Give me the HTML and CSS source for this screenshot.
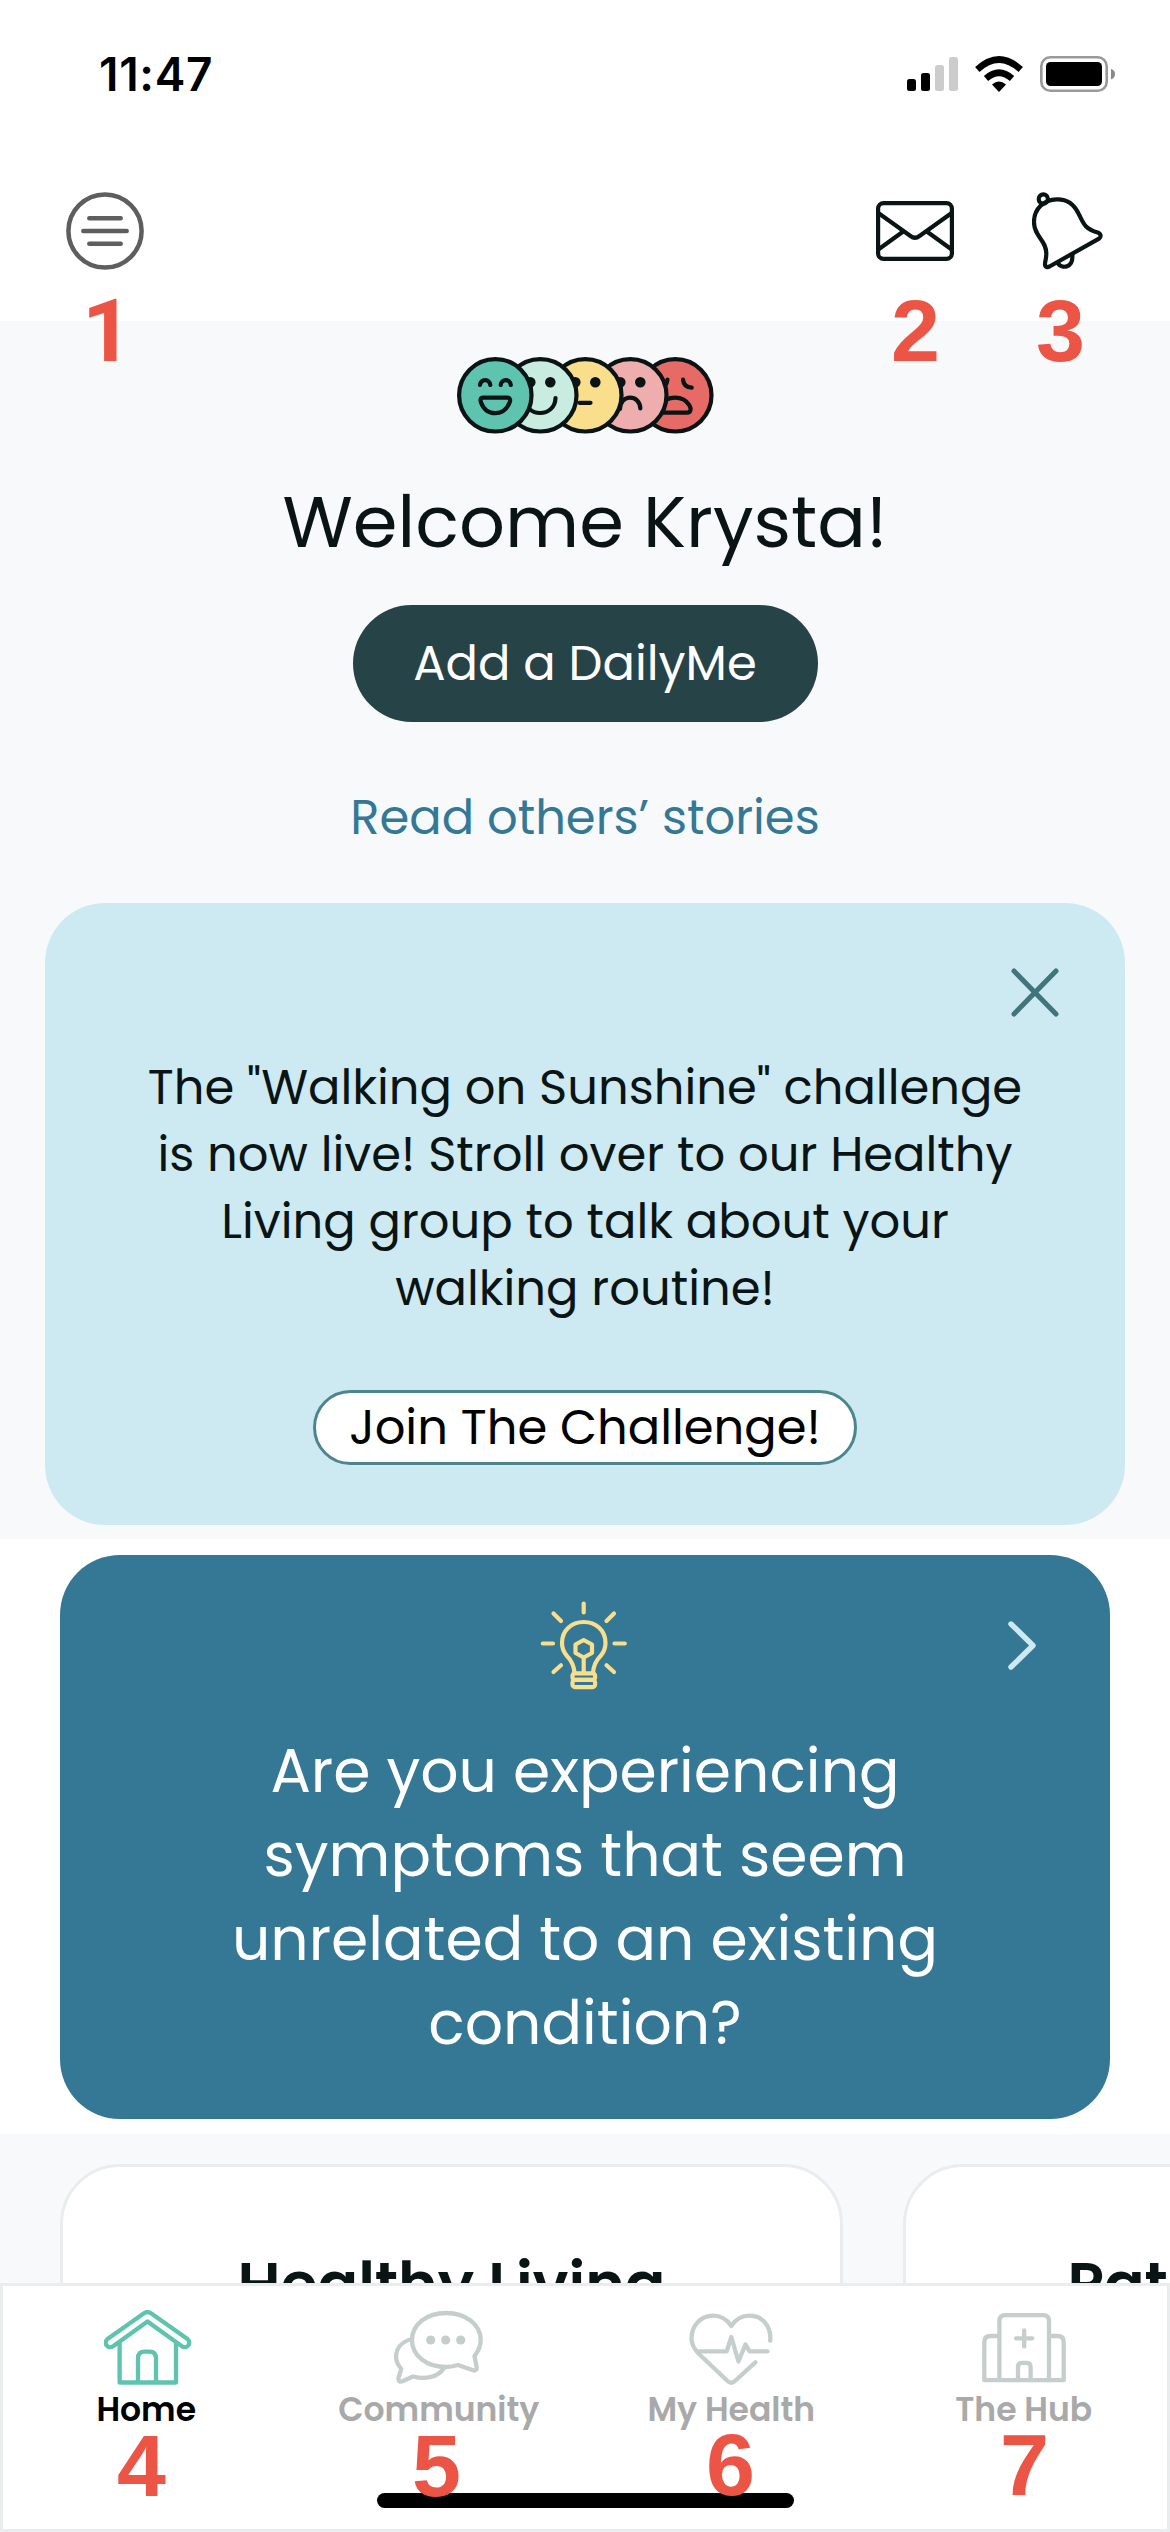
FILE: index.html
```html
<!DOCTYPE html>
<html lang="en">
<head>
  <meta charset="UTF-8">
  <meta name="viewport" content="width=device-width, initial-scale=1.0">
  <title>Home</title>
  <link rel="stylesheet" href="styles.css">
</head>
<body>
  <div class="screen">
    <div class="status-bar">
      <span class="time">11:47</span>
      <div class="status-icons">
        <svg class="signal" width="51" height="34" viewBox="0 0 51 34">
          <rect x="0" y="22" width="9" height="12" rx="2.5"/>
          <rect x="14" y="16" width="9" height="18" rx="2.5"/>
          <rect x="28" y="8" width="9" height="26" rx="2.5" fill="#ccc"/>
          <rect x="42" y="0" width="9" height="34" rx="2.5" fill="#ccc"/>
        </svg>
        <svg class="wifi" width="48" height="36" viewBox="0 0 48 36">
          <path d="M24 36 L17 28.5 Q24 22.5 31 28.5 Z"/>
          <path d="M11 22.5 Q24 11 37 22.5" fill="none" stroke="#000" stroke-width="6.5"/>
          <path d="M2.3 13.5 Q24 -6.5 45.7 13.5" fill="none" stroke="#000" stroke-width="6.5"/>
        </svg>
        <svg class="battery" width="75" height="36" viewBox="0 0 75 36">
          <rect x="1.3" y="1.3" width="65.4" height="33.4" rx="9" fill="none" stroke="#999" stroke-width="2.6"/>
          <rect x="6" y="6" width="56" height="24" rx="4.5"/>
          <path d="M71 13 Q75 14 75 18 Q75 22 71 23.5 Z" fill="#888"/>
        </svg>
      </div>
    </div>

    <header class="toolbar">
      <svg width="78" height="78" viewBox="0 0 78 78" fill="none" stroke="#5e5e5e" stroke-width="4.5" stroke-linecap="round">
        <circle cx="39" cy="39" r="36.6"/>
        <path d="M23.3 26.3H54.7M17.3 39H60.7M23.3 51.7H54.7"/>
      </svg>
      <div class="toolbar-right">
        <svg width="78" height="60" viewBox="0 0 78 60" fill="none" stroke="#0a1414" stroke-width="4.2" stroke-linecap="round" stroke-linejoin="round">
          <rect x="2.1" y="2.1" width="73.8" height="55.8" rx="5.5"/>
          <path d="M3 12.5L34.5 35Q39 38.5 43.5 35L75 12.5M3 48L26.5 31M51.5 31L75 48"/>
        </svg>
        <svg width="71" height="78" viewBox="0 0 71 78" fill="none" stroke="#0a1414" stroke-width="4.2" stroke-linecap="round" stroke-linejoin="round">
          <circle cx="11.3" cy="7" r="4.6"/>
          <path d="M24.7 7.3C12 7.5 2 17 2 30C2 45 14.8 48 14.3 62C14.2 68 13 69 13 72C13 75.5 15.5 75.5 17.5 74.5L67 46.7C69.5 45 69 41.5 65.7 40.5C52 36.5 51.5 31 46.5 21.5C42 12 34 7 24.7 7.3Z"/>
          <path d="M25.5 71C30 77.5 41.5 76 40.3 62.5"/>
        </svg>
      </div>
    </header>

    <main>
      <section class="hero">
        <svg class="faces" width="257" height="77" viewBox="0 0 257 77" fill="none" stroke="#0a1414" stroke-width="4.2" stroke-linecap="round" stroke-linejoin="round">
          <circle cx="218.3" cy="38.3" r="36.2" fill="#e66b67"/>
          <path d="M226 22.5C226.5 28 230 30.5 234.7 30.7M210.5 22.5C210 28 206.5 30.5 202 30.7"/>
          <path d="M204 55.7H230C238 55.7 232 40.7 218 40.7C204 40.7 197 55.7 204 55.7Z"/>
          <circle cx="173.3" cy="38.3" r="36.2" fill="#eeaeae"/>
          <circle cx="163.3" cy="25.3" r="3.2" fill="#0a1414"/>
          <circle cx="183.3" cy="25.3" r="3.2" fill="#0a1414"/>
          <path d="M163 52C163 37 183 37 183.3 51.5"/>
          <circle cx="128.3" cy="38.3" r="36.2" fill="#f9de8b"/>
          <circle cx="118.3" cy="25.3" r="3.2" fill="#0a1414"/>
          <circle cx="138.3" cy="25.3" r="3.2" fill="#0a1414"/>
          <path d="M122.5 45.8H133.5"/>
          <circle cx="83.3" cy="38.3" r="36.2" fill="#c9ece0"/>
          <circle cx="73.3" cy="25.3" r="3.2" fill="#0a1414"/>
          <circle cx="93.3" cy="25.3" r="3.2" fill="#0a1414"/>
          <path d="M68 41C68 61 98 61 98.5 41"/>
          <circle cx="38.3" cy="38.3" r="36.2" fill="#5ec4b0"/>
          <path d="M23 28C24 21.5 32.5 21.5 33.3 28M43.7 28C44.5 21.5 53 21.5 53.8 28"/>
          <path d="M26 40.7H50.5C53 40.7 53.5 43 52.8 45C50 52.5 44.5 56.2 38.3 56.2C32 56.2 26.5 52.5 23.8 45C23.2 43 23.5 40.7 26 40.7Z"/>
        </svg>
        <h1>Welcome Krysta!</h1>
        <button class="daily-button"><span>Add a DailyMe</span></button>
        <a class="stories-link">Read others’ stories</a>

        <div class="challenge-card">
          <svg class="close" width="48" height="49" viewBox="0 0 48 49" fill="none" stroke="#41747b" stroke-width="5" stroke-linecap="round">
            <path d="M3 3L45 46M45 3L3 46"/>
          </svg>
          <p>The "Walking on Sunshine" challenge<br>is now live! Stroll over to our Healthy<br>Living group to talk about your<br>walking routine!</p>
          <button class="join-button"><span>Join The Challenge!</span></button>
        </div>
      </section>

      <section class="prompt">
        <div class="prompt-card">
          <div class="prompt-top">
            <svg class="bulb" width="90" height="90" viewBox="0 0 90 90" fill="none" stroke="#f9de8b" stroke-width="4.2" stroke-linecap="round" stroke-linejoin="round">
              <path d="M43.7 3.5V12.5M13.5 13.5L21 21M2.8 43.5H13M13.5 72L21 65.3M74 13.5L66.5 21M84.8 43.5H74.5M74 72L66.5 65.3"/>
              <path d="M34.5 73C34 66 31.5 60.5 27 56C23.5 52 22 48 22 43C22 30.5 31.5 22 43.7 22C56 22 65.5 30.5 65.5 43C65.5 48 64 52 60.5 56C56 60.5 53.5 66 53 73"/>
              <path d="M43.7 40L52 44.5V53L43.7 57.5L35.5 53V44.5ZM43.7 58V73"/>
              <rect x="32.5" y="73.3" width="22.6" height="6.6" rx="2.5"/>
              <rect x="32.5" y="79.9" width="22.6" height="7.2" rx="2.5"/>
            </svg>
            <svg class="chevron" width="28" height="49" viewBox="0 0 28 49" fill="none" stroke="#cdeaf2" stroke-width="5.4" stroke-linecap="round" stroke-linejoin="round">
              <path d="M3 3L25 24.5L3 46"/>
            </svg>
          </div>
          <p>Are you experiencing<br>symptoms that seem<br>unrelated to an existing<br>condition?</p>
        </div>
      </section>

      <section class="groups">
        <div class="group-card"><h2>Healthy Living</h2></div>
        <div class="group-card stories"><h2>Patient Stories</h2></div>
      </section>
    </main>

    <nav class="tab-bar">
      <a class="tab active">
        <svg class="home-icon" width="88" height="75" viewBox="0 0 88 75">
          <path d="M40 3.2Q43.5 1 47 3.2L83.5 29C88 33 83 40 77.5 36L43.5 11.5L9.5 36C4 40 -1 33 3.5 29Z"/>
          <path d="M15.6 33V72.5H72V33M34 72V48.5Q34 41.7 40.5 41.7H45.5Q52 41.7 52 48.5V72"/>
        </svg>
        <span>Home</span>
      </a>
      <a class="tab">
        <svg width="89" height="75" viewBox="0 -1 89 75">
          <path d="M80.5 45C84.5 40 86.7 35 86.7 29C86.7 13 71 2 52.2 2C33 2 18 13 18 29C18 45 33 56 52 56C56 56 60 55.2 64 54L79 59.3C81.5 60 83 58.5 82.7 56.5Z"/>
          <path d="M17.5 28C7 31 2 38 2 46C2 51 4 54 7.3 58L4.5 67C4 70.5 6.5 71.5 9 70L19 65.5C32 69 44 66 50 57"/>
          <g class="dots"><circle cx="36.7" cy="29" r="4.6"/><circle cx="51.7" cy="29" r="4.6"/><circle cx="66.7" cy="29" r="4.6"/></g>
        </svg>
        <span>Community</span>
      </a>
      <a class="tab">
        <svg width="84" height="75" viewBox="0 -3 84 75">
          <path d="M81.2 27.5C82.5 13 73 2.7 60.5 2.7C52.5 2.7 46.5 6.5 42.3 13C38 6.5 32 2.7 24 2.7C11.5 2.7 2.5 13 2.5 25.5C2.5 32 5.5 36.5 10 41L38.5 68Q42.3 71.5 46 68L66.3 49.3"/>
          <path d="M9 38.3H37.7L42.3 24L49.5 48.5L56.4 31.5L60.6 38.3H78.5"/>
        </svg>
        <span>My Health</span>
      </a>
      <a class="tab">
        <svg width="84" height="75" viewBox="0 -3 84 75">
          <path d="M2.3 67.2H81.7V29Q81.7 23 75.7 23H67M2.3 67.2V29Q2.3 23 8.3 23H17.4M17.4 67V8Q17.4 2.1 23.4 2.1H61Q67 2.1 67 8V67"/>
          <path d="M34 25.3H50.3M42.2 17.5V33.5M36 67V54Q36 49.8 40 49.8H44.6Q48.6 49.8 48.6 54V67"/>
        </svg>
        <span>The Hub</span>
      </a>
      <div class="home-indicator"></div>
    </nav>

    <!-- callout numbers over the icons -->
    <span class="mark mark-1">1</span>
    <span class="mark mark-2">2</span>
    <span class="mark mark-3">3</span>
    <span class="mark mark-4">4</span>
    <span class="mark mark-5">5</span>
    <span class="mark mark-6">6</span>
    <span class="mark mark-7">7</span>
  </div>
</body>
</html>
```
FILE: styles.css
```css
:root {
  --ink: #0a1414;
  --blue: #347896;
  --pale: #cdeaf2;
  --surface: #f8f9fb;
  --line: #e9eded;
}
* {
  box-sizing: border-box;
}
body {
  margin: 0;
  background: #fff;
  color: var(--ink);
  font-family: Poppins, Inter, sans-serif;
}
h1, h2, p {
  margin: 0;
  font-weight: 400;
}
svg {
  display: block;
}
button {
  display: flex;
  align-items: center;
  justify-content: center;
  margin: 0;
  padding: 0;
  border: none;
  font: inherit;
  white-space: nowrap;
}
.screen {
  position: relative;
  display: flex;
  flex-direction: column;
  width: 1170px;
  height: 2532px;
  overflow: hidden;
}

.status-bar {
  display: flex;
  flex: none;
  justify-content: space-between;
  align-items: center;
  height: 148px;
  padding: 0 55px 0 99px;
}
.time {
  font-family: Inter, sans-serif;
  font-size: 46px;
  font-weight: 600;
  letter-spacing: 0.7px;
  color: #000;
}
.status-icons {
  display: flex;
  align-items: center;
  gap: 17px;
}

.toolbar {
  display: flex;
  flex: none;
  justify-content: space-between;
  align-items: center;
  height: 173px;
  padding: 0 67px 7px 66px;
}
.toolbar-right {
  display: flex;
  align-items: center;
  gap: 78px;
}

main {
  flex: 1;
  min-height: 0;
  overflow: hidden;
}
.hero {
  display: flex;
  flex-direction: column;
  align-items: center;
  height: 1218px;
  padding-top: 36px;
  background: var(--surface);
}
h1 {
  margin-top: 46px;
  font-size: 72px;
  line-height: 84px;
  white-space: nowrap;
}
.daily-button {
  width: 465px;
  height: 117px;
  margin-top: 41px;
  border-radius: 59px;
  background: #264348;
  color: #fff;
  font-size: 48px;
}
.stories-link {
  margin-top: 66px;
  font-size: 48px;
  line-height: 60px;
  color: var(--blue);
}
.challenge-card {
  display: flex;
  flex-direction: column;
  align-items: center;
  width: 1080px;
  height: 622px;
  margin-top: 55px;
  padding-top: 65px;
  border-radius: 60px;
  background: var(--pale);
  text-align: center;
}
.challenge-card p {
  margin-top: 37px;
  font-size: 48px;
  line-height: 67px;
  white-space: nowrap;
}
.close {
  align-self: flex-end;
  margin-right: 66px;
}
.join-button {
  width: 544px;
  height: 75px;
  margin-top: 68px;
  border: 3px solid #4c858b;
  border-radius: 38px;
  background: #fff;
  color: #000;
  font-size: 48px;
}

.prompt {
  padding: 16px 60px 15px;
}
.prompt-card {
  height: 564px;
  padding-top: 45px;
  border-radius: 60px;
  background: var(--blue);
  color: #fff;
  text-align: center;
}
.prompt-top {
  display: grid;
  grid-template-columns: 1fr auto 1fr;
  align-items: center;
  padding-right: 74px;
  padding-left: 74px;
}
.bulb {
  grid-column: 2;
}
.chevron {
  justify-self: end;
}
.prompt-card p {
  margin-top: 39px;
  font-size: 60px;
  line-height: 84px;
  white-space: nowrap;
}

.groups {
  display: flex;
  gap: 60px;
  padding: 30px 60px;
  background: var(--surface);
}
.group-card {
  flex: none;
  width: 783px;
  height: 600px;
  padding-top: 77px;
  border: 3px solid var(--line);
  border-radius: 60px;
  background: #fff;
  text-align: center;
}
.group-card.stories {
  padding-right: 14px;
}
h2 {
  font-size: 60px;
  font-weight: 600;
  line-height: 80px;
}

.tab-bar {
  position: relative;
  display: flex;
  flex: none;
  height: 249px;
  padding-top: 24px;
  border: 3px solid var(--line);
  background: #fff;
}
.tab {
  display: flex;
  flex: none;
  flex-direction: column;
  align-items: center;
  gap: 5px;
  width: 292.5px;
  font-size: 33px;
  font-weight: 600;
  line-height: 40px;
  color: #a9a9a9;
}
.tab:first-child {
  margin-left: -3px;
}
.tab:nth-child(4) {
  margin-right: -3px;
}
.tab svg {
  fill: none;
  stroke: #c6cecd;
  stroke-width: 4.3;
  stroke-linecap: round;
  stroke-linejoin: round;
}
.tab .dots {
  fill: #c6cecd;
  stroke: none;
}
.tab.active {
  color: #000;
}
.tab.active svg {
  stroke: #5ec4b0;
}
.home-icon {
  margin-left: 3px;
}
.home-indicator {
  position: absolute;
  bottom: 21px;
  left: 374px;
  width: 417px;
  height: 15px;
  border-radius: 8px;
  background: #000;
}

.mark {
  position: absolute;
  font-family: "Liberation Sans", Arial, sans-serif;
  font-size: 88px;
  font-weight: 700;
  line-height: 68px;
  color: #ec5545;
}
.mark-1 {
  top: 297px;
  left: 82px;
  font-family: Roboto, sans-serif;
}
.mark-2 {
  top: 297px;
  left: 891px;
}
.mark-3 {
  top: 297px;
  left: 1036px;
}
.mark-4 {
  top: 2432px;
  left: 117px;
}
.mark-5 {
  top: 2432px;
  left: 412px;
}
.mark-6 {
  top: 2431px;
  left: 706px;
}
.mark-7 {
  top: 2431px;
  left: 1000px;
}
```
